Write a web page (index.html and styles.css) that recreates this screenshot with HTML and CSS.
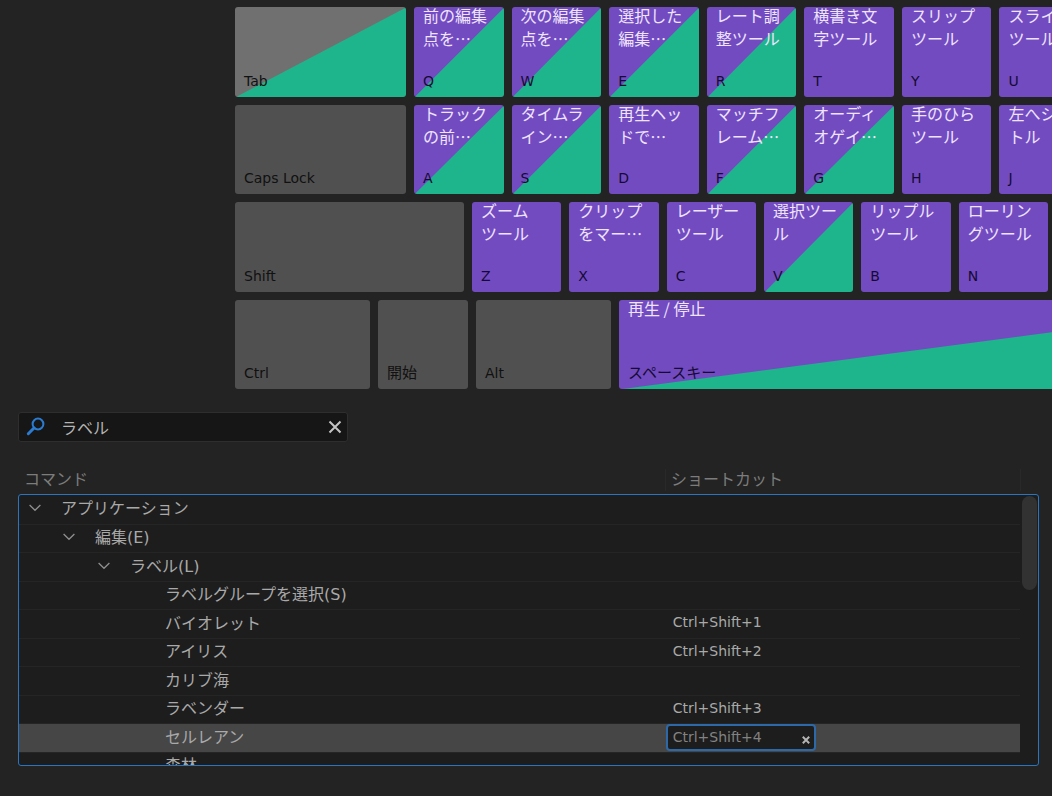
FILE: index.html
```html
<!DOCTYPE html>
<html lang="ja">
<head>
<meta charset="utf-8">
<meta name="viewport" content="width=device-width, initial-scale=1">
<title>キーボードショートカット</title>
<link rel="stylesheet" href="styles.css">
</head>
<body>
<main class="dialog">
  <section class="keyboard" aria-label="キーボード">
    <div class="key-row">
      <button class="key key-tab"><span class="cap">Tab</span></button>
      <button class="key app split"><span class="command">前の編集<br>点を…</span><span class="cap">Q</span></button>
      <button class="key app split"><span class="command">次の編集<br>点を…</span><span class="cap">W</span></button>
      <button class="key app split"><span class="command">選択した<br>編集…</span><span class="cap">E</span></button>
      <button class="key app split"><span class="command">レート調<br>整ツール</span><span class="cap">R</span></button>
      <button class="key app"><span class="command">横書き文<br>字ツール</span><span class="cap">T</span></button>
      <button class="key app"><span class="command">スリップ<br>ツール</span><span class="cap">Y</span></button>
      <button class="key app"><span class="command">スライド<br>ツール</span><span class="cap">U</span></button>
    </div>
    <div class="key-row">
      <button class="key key-caps"><span class="cap">Caps Lock</span></button>
      <button class="key app split"><span class="command">トラック<br>の前…</span><span class="cap">A</span></button>
      <button class="key app split"><span class="command">タイムラ<br>イン…</span><span class="cap">S</span></button>
      <button class="key app"><span class="command">再生ヘッ<br>ドで…</span><span class="cap">D</span></button>
      <button class="key app split"><span class="command">マッチフ<br>レーム…</span><span class="cap">F</span></button>
      <button class="key app split"><span class="command">オーディ<br>オゲイ…</span><span class="cap">G</span></button>
      <button class="key app"><span class="command">手のひら<br>ツール</span><span class="cap">H</span></button>
      <button class="key app"><span class="command">左へシャ<br>トル</span><span class="cap">J</span></button>
    </div>
    <div class="key-row row-shift">
      <button class="key key-shift"><span class="cap">Shift</span></button>
      <button class="key app"><span class="command">ズーム<br>ツール</span><span class="cap">Z</span></button>
      <button class="key app"><span class="command">クリップ<br>をマー…</span><span class="cap">X</span></button>
      <button class="key app"><span class="command">レーザー<br>ツール</span><span class="cap">C</span></button>
      <button class="key app split"><span class="command">選択ツー<br>ル</span><span class="cap">V</span></button>
      <button class="key app"><span class="command">リップル<br>ツール</span><span class="cap">B</span></button>
      <button class="key app"><span class="command">ローリン<br>グツール</span><span class="cap">N</span></button>
    </div>
    <div class="key-row">
      <button class="key key-mod"><span class="cap">Ctrl</span></button>
      <button class="key key-start"><span class="cap cap-ja">開始</span></button>
      <button class="key key-mod"><span class="cap">Alt</span></button>
      <button class="key app split key-space"><span class="command">再生 / 停止</span><span class="cap cap-ja">スペースキー</span></button>
    </div>
  </section>

  <section class="commands">
    <form class="search" role="search">
      <svg class="search-icon" viewBox="0 0 20 20" aria-hidden="true"><circle cx="12" cy="7" r="5.4"/><path class="handle" d="M8 11 2.3 16.7"/></svg>
      <input class="search-input" type="text" aria-label="検索" value="ラベル">
      <button class="search-clear" type="button" aria-label="クリア"><svg viewBox="0 0 14 14" aria-hidden="true"><path d="M1.500 1.500 12.500 12.500M12.500 1.500 1.500 12.500"/></svg></button>
    </form>

    <div class="columns">
      <span class="column">コマンド</span>
      <span class="column">ショートカット</span>
    </div>

    <div class="list">
      <table class="tree" aria-label="コマンド一覧">
        <colgroup><col class="col-command"><col></colgroup>
        <tbody>
          <tr><td class="level-0"><svg class="chevron" viewBox="0 0 12 8" aria-hidden="true"><path d="M.6 1 6 6.300 11.400 1"/></svg>アプリケーション</td><td></td></tr>
          <tr><td class="level-1"><svg class="chevron" viewBox="0 0 12 8" aria-hidden="true"><path d="M.6 1 6 6.300 11.400 1"/></svg>編集(E)</td><td></td></tr>
          <tr><td class="level-2"><svg class="chevron" viewBox="0 0 12 8" aria-hidden="true"><path d="M.6 1 6 6.300 11.400 1"/></svg>ラベル(L)</td><td></td></tr>
          <tr><td class="level-3">ラベルグループを選択(S)</td><td></td></tr>
          <tr><td class="level-3">バイオレット</td><td class="shortcut">Ctrl+Shift+1</td></tr>
          <tr><td class="level-3">アイリス</td><td class="shortcut">Ctrl+Shift+2</td></tr>
          <tr><td class="level-3">カリブ海</td><td></td></tr>
          <tr><td class="level-3">ラベンダー</td><td class="shortcut">Ctrl+Shift+3</td></tr>
          <tr class="selected"><td class="level-3">セルレアン</td><td class="editing"><div class="editor"><input class="editor-input" type="text" aria-label="セルレアンのショートカット" value="Ctrl+Shift+4"><button class="editor-clear" type="button" aria-label="削除"><svg viewBox="0 0 8 8" aria-hidden="true"><path d="M.8 .8 7.200 7.200M7.200 .8 .8 7.200"/></svg></button></div></td></tr>
          <tr><td class="level-3">森林</td><td></td></tr>
        </tbody>
      </table>
      <div class="scrollbar"><div class="thumb"></div></div>
    </div>
  </section>
</main>
</body>
</html>
```
FILE: styles.css
```css
* { box-sizing: border-box; }

body {
  margin: 0;
  overflow: hidden;
  background: #232323;
  color: #a9a9a9;
  font: 16px/22px "DejaVu Sans", "Noto Sans CJK JP", sans-serif;
}

button, input {
  margin: 0;
  padding: 0;
  border: 0;
  background: none;
  color: inherit;
  font: inherit;
}

.dialog { padding: 7px 0 30px; }

/* Keyboard: runs past the right edge of the window */
.keyboard {
  display: grid;
  grid-template-rows: repeat(4, 1fr);
  gap: 8px;
  height: 382px;
  margin: 0 -37px 0 235px;
}

.key-row { display: flex; gap: 8px; min-width: 0; }
.row-shift { margin-right: 41px; }

.key {
  display: flex;
  flex: 1 1 0;
  flex-direction: column;
  justify-content: space-between;
  min-width: 0;
  padding: 0 0 5px 9px;
  border-radius: 3px;
  background: #505050;
  text-align: left;
  white-space: nowrap;
}

.app { background: #734bc0; color: #eee4ff; }
.split { background: linear-gradient(to bottom right, #734bc0 50%, #1fb58c calc(50% + 1px)); }
.key-tab { flex: 0 0 171px; background: linear-gradient(to bottom right, #707070 50%, #1fb58c calc(50% + 1px)); }
.key-caps { flex: 0 0 171px; }
.key-shift { flex: 0 0 229px; }
.key-mod { flex: 0 0 135px; }
.key-start { flex: 0 0 90px; }
.key-space { flex: 0 0 673px; }

.command { margin-top: -3px; font-family: "Noto Sans CJK JP", sans-serif; line-height: 23px; }

.cap { margin-top: auto; color: #111; font-size: 14px; }
.cap-ja { font-size: 15px; }
.app .cap { color: #150a35; }

/* Search box */
.commands { margin: 23px 13px 0 18px; }

.search {
  display: flex;
  align-items: center;
  width: 330px;
  height: 30px;
  padding: 0 5px 0 7px;
  border: 1px solid #2e2e2e;
  border-radius: 3px;
  background: #161616;
}

.search-icon { width: 20px; height: 20px; fill: none; stroke: #2b7cd0; stroke-width: 2; }
.search-icon .handle { stroke-width: 3; stroke-linecap: round; }
.search-input { flex: 1; min-width: 0; height: 28px; padding-left: 15px; color: #b4b4b4; outline: 0; }
.search-clear { display: flex; }
.search-clear svg { width: 14px; height: 14px; stroke: #c4c4c4; stroke-width: 2; }

/* Column headings */
.columns {
  display: grid;
  grid-template-columns: 647fr 355fr;
  margin: 27px 18px 3px 1px;
  color: #7c7c7c;
}

.column { padding-left: 5px; border-right: 1px solid #292929; }

/* Command tree */
.list {
  display: flex;
  height: 272px;
  overflow: hidden;
  border: 1px solid #2a75c0;
  border-radius: 3px;
  background: #1d1d1d;
}

.tree { flex: 1; height: 285px; border-collapse: collapse; table-layout: fixed; }
.col-command { width: 64.6%; }
.tree tr { height: 28px; border-bottom: 1px solid #252525; }
.tree tr:nth-child(odd) { height: 29px; }
.tree td { padding: 0; white-space: nowrap; }
.tree .level-0 { padding-left: 10px; }
.tree .level-1 { padding-left: 44px; }
.tree .level-2 { padding-left: 79px; }
.tree .level-3 { padding-left: 146px; }
.tree .shortcut { padding: 0 0 3px 7px; font-size: 14px; }
.tree .selected { background: #464646; }

.chevron {
  width: 12px;
  height: 8px;
  margin-right: 20px;
  vertical-align: 2px;
  fill: none;
  stroke: #8e8e8e;
  stroke-width: 1.3;
}

.editor {
  display: flex;
  width: 150px;
  height: 27px;
  padding: 0 4px 0 5px;
  border: 2px solid #2d69a8;
  border-radius: 4px;
  background: #1d1d1d;
}

.editor-input { flex: 1; min-width: 0; padding-bottom: 2px; color: #828282; font-size: 14px; outline: 0; }
.editor-clear { display: flex; align-items: flex-end; padding-bottom: 5px; }
.editor-clear svg { width: 8px; height: 8px; stroke: #b5b5b5; stroke-width: 2; }

.scrollbar { width: 18px; padding: 1px 1px 0 2px; }
.thumb { height: 94px; border-radius: 8px; background: #323232; }
```
